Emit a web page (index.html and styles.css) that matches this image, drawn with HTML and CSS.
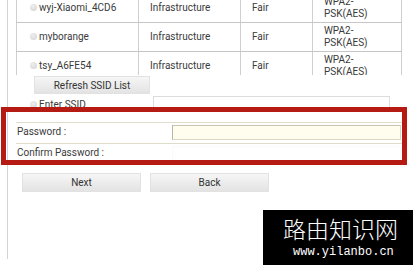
FILE: index.html
```html
<!DOCTYPE html>
<html lang="en">
<head>
    <meta charset="UTF-8">
    <meta name="viewport" content="width=device-width, initial-scale=1.0">
    <title>Wireless Setup</title>
    <link rel="stylesheet" href="styles.css">
</head>
<body>
    <div class="page">
        <div class="ssid-list">
            <table>
                <tr>
                    <td class="ssid"><span class="radio"></span>wyj-Xiaomi_4CD6</td>
                    <td>Infrastructure</td>
                    <td>Fair</td>
                    <td>WPA2-<br>PSK(AES)</td>
                </tr>
                <tr>
                    <td class="ssid"><span class="radio"></span>myborange</td>
                    <td>Infrastructure</td>
                    <td>Fair</td>
                    <td>WPA2-<br>PSK(AES)</td>
                </tr>
                <tr>
                    <td class="ssid"><span class="radio"></span>tsy_A6FE54</td>
                    <td>Infrastructure</td>
                    <td>Fair</td>
                    <td>WPA2-<br>PSK(AES)</td>
                </tr>
            </table>
        </div>

        <div class="refresh-row">
            <button class="btn refresh">Refresh SSID List</button>
        </div>

        <div class="ssid-row">
            <label class="ssid-label"><span class="radio"></span>Enter SSID</label>
            <input type="text" class="ssid-input">
        </div>

        <div class="pw-block">
            <div class="pw-row">
                <span class="pw-label">Password :</span>
                <input type="password" class="pw-input">
            </div>
            <div class="pw-row">
                <span class="pw-label">Confirm Password :</span>
                <input type="password" class="pw-input confirm">
            </div>
        </div>

        <div class="actions">
            <button class="btn action">Next</button>
            <button class="btn action">Back</button>
        </div>
    </div>

    <!-- red highlight drawn over the password fields -->
    <div class="highlight"></div>

    <div class="watermark">
        <div class="wm-title">路由知识网</div>
        <div class="wm-url">www.yilanbo.cn</div>
    </div>
</body>
</html>
```

FILE: styles.css
```css
body {
    margin: 0;
    padding: 0;
    background: #fff;
    font-family: Roboto, "Liberation Sans", Arial, sans-serif;
    font-size: 10px;
    color: #3a3a3a;
    overflow: hidden;
}
.page {
    margin-left: 7px;
    padding-left: 8px;
    border-left: 1px solid #d4d4d4;
    height: 265px;
    box-sizing: border-box;
}
.ssid-list {
    margin-top: -6px;
    height: 81px;
    width: 386px;
    overflow: hidden;
}
table {
    border-collapse: collapse;
    width: 386px;
}
td {
    height: 28px;
    padding: 0 0 0 11px;
    border-left: 1px solid #cfcfcf;
    border-right: 1px solid #cfcfcf;
    border-bottom: 1px solid #c6c6c6;
    line-height: 12px;
    vertical-align: middle;
}
td:nth-child(1) { width: 108px; padding-left: 13px; }
td:nth-child(2) { width: 90px; }
td:nth-child(3) { width: 60px; }
.radio {
    display: inline-block;
    width: 7px;
    height: 7px;
    margin-right: 2px;
    border-radius: 50%;
    background: radial-gradient(circle at 40% 35%, #eee, #d2d2d2);
}
.btn {
    font-family: Roboto, "Liberation Sans", Arial, sans-serif;
    font-size: 10px;
    color: #333;
    background: linear-gradient(#f6f6f6, #e3e3e3);
    border: 1px solid #e2e2e2;
    padding: 0;
}
.refresh-row {
    margin-top: 1px;
    padding-left: 18px;
}
.refresh {
    width: 116px;
    height: 18px;
    display: block;
}
.ssid-row {
    display: flex;
    align-items: flex-start;
    margin-top: 2px;
    height: 16px;
}
.ssid-label {
    width: 137px;
    padding-left: 14px;
    padding-top: 3px;
    box-sizing: border-box;
}
.ssid-input {
    width: 237px;
    height: 16px;
    box-sizing: border-box;
    border: 1px solid #dcdcdc;
    margin: 0;
}
.pw-block {
    margin-top: 10px;
    width: 386px;
}
.pw-row {
    display: flex;
    align-items: flex-start;
    height: 20px;
    border-top: 1px solid #e0dccc;
}
.pw-label {
    width: 155px;
    padding-left: 1px;
    padding-top: 3px;
}
.pw-input {
    width: 229px;
    height: 15px;
    margin: 2px 0 0;
    box-sizing: border-box;
    background: #fffdee;
    border: 1px solid #ddd8c4;
    border-left-color: #b8b4a6;
    border-top-color: #c8c4b4;
}
.pw-input.confirm {
    background: #fff;
    border-color: #fbfaf6;
}
.actions {
    display: flex;
    gap: 9px;
    margin-top: 9px;
    padding-left: 6px;
}
.action {
    width: 119px;
    height: 19px;
}
.highlight {
    position: absolute;
    left: 1px;
    top: 107px;
    width: 406px;
    height: 58px;
    box-sizing: border-box;
    border: 5px solid #b51b13;
}
.watermark {
    position: absolute;
    left: 263px;
    top: 210px;
    width: 150px;
    height: 55px;
    background: #000;
    color: #fff;
}
.wm-title {
    font-family: "Noto Sans CJK SC", sans-serif;
    font-weight: 300;
    font-size: 23px;
    line-height: 26px;
    margin: 5px 0 0 20px;
}
.wm-url {
    font-family: "Liberation Mono", "DejaVu Sans Mono", monospace;
    font-size: 12px;
    line-height: 14px;
    margin: 4px 0 0 30px;
}
```
